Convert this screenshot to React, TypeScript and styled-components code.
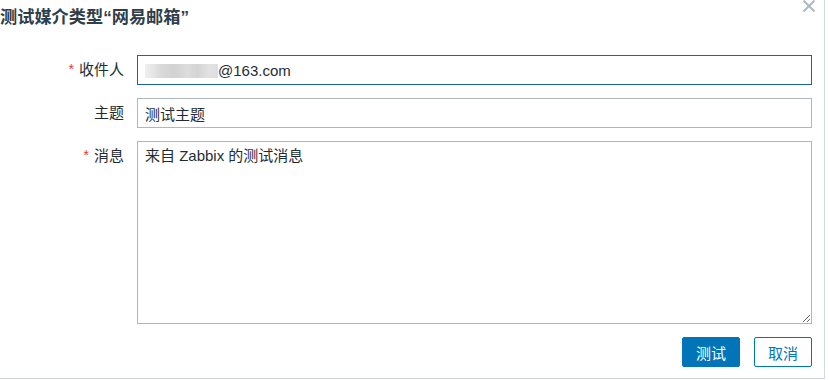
import React from "react";
import styled, { createGlobalStyle } from "styled-components";

const Global = createGlobalStyle`
  html, body { margin: 0; padding: 0; background: #ffffff; }
  body { font-family: "Liberation Sans", "Noto Sans CJK SC", Arial, sans-serif; }
  * { box-sizing: border-box; }
`;

const Dialog = styled.div`
  position: relative;
  width: 825px;
  height: 379px;
  background: #ffffff;
  border-right: 1px solid #d3d9dd;
  border-bottom: 1px solid #cfd4d7;
  padding: 7px 12px 0 0;
  display: flex;
  flex-direction: column;
`;

const Title = styled.h4`
  margin: 0;
  font-size: 17.2px;
  line-height: 20px;
  font-weight: bold;
  color: #2f3e48;
  font-family: "Liberation Sans", "Noto Sans CJK SC", Arial, sans-serif;
`;

const CloseButton = styled.button`
  position: absolute;
  top: 0;
  right: 7px;
  width: 16px;
  height: 14px;
  padding: 0;
  border: 0;
  background: transparent;
  display: flex;
  align-items: flex-start;
  justify-content: center;
  cursor: pointer;
`;

const Form = styled.div`
  margin-top: 28px;
  display: grid;
  grid-template-columns: 124px 1fr;
  column-gap: 13px;
  row-gap: 13px;
`;

const Label = styled.label`
  text-align: right;
  font-size: 15px;
  line-height: 30px;
  color: #1f2c33;
  white-space: nowrap;
`;

const Required = styled.span`
  color: #e33734;
  margin-right: 5px;
  font-size: 14px;
  position: relative;
  top: -1px;
`;

const Field = styled.div<{ $focused?: boolean }>`
  height: 30px;
  border: 1px solid ${(p) => (p.$focused ? "#1e64a0" : "#acb7be")};
  background: #ffffff;
  display: flex;
  align-items: center;
  padding: 0 7px;
  font-size: 15px;
  color: #1f2c33;
`;

const Masked = styled.span`
  display: inline-block;
  width: 73px;
  height: 14px;
  margin-top: 2px;
  background: linear-gradient(
    90deg,
    #efefef 0%,
    #e4e4e4 12%,
    #d9d9d9 22%,
    #d2d2d2 40%,
    #dcdcdc 58%,
    #d4d4d4 72%,
    #e2e2e2 88%,
    #dedede 100%
  );
  filter: blur(0.6px);
`;

const Area = styled.textarea`
  height: 183px;
  border: 1px solid #acb7be;
  padding: 5px 7px;
  font-family: "Liberation Sans", "Noto Sans CJK SC", Arial, sans-serif;
  font-size: 15px;
  line-height: 18px;
  color: #1f2c33;
  resize: both;
  outline: none;
  margin: 0;
  display: block;
  width: 100%;
`;

const Footer = styled.div`
  margin-top: 13px;
  display: flex;
  justify-content: flex-end;
  gap: 14px;
`;

const Button = styled.button<{ $primary?: boolean }>`
  height: 30px;
  min-width: 58px;
  padding: 0 11px;
  border-radius: 2px;
  border: 1px solid #0275b8;
  background: ${(p) => (p.$primary ? "#0275b8" : "#ffffff")};
  color: ${(p) => (p.$primary ? "#ffffff" : "#0275b8")};
  font-family: "Liberation Sans", "Noto Sans CJK SC", Arial, sans-serif;
  font-size: 15px;
  cursor: pointer;
`;

export default function App() {
  return (
    <>
      <Global />
      <Dialog>
        <Title>测试媒介类型“网易邮箱”</Title>
        <CloseButton aria-label="关闭">
          <svg width="14" height="13" viewBox="0 0 14 13">
            <path d="M1.5 0.5 L12.5 11.5 M12.5 0.5 L1.5 11.5" stroke="#acbbc2" strokeWidth="2" fill="none" />
          </svg>
        </CloseButton>
        <Form>
          <Label>
            <Required>*</Required>收件人
          </Label>
          <Field $focused>
            <Masked />
            <span>@163.com</span>
          </Field>
          <Label>主题</Label>
          <Field>测试主题</Field>
          <Label>
            <Required>*</Required>消息
          </Label>
          <Area defaultValue="来自 Zabbix 的测试消息" />
        </Form>
        <Footer>
          <Button $primary>测试</Button>
          <Button>取消</Button>
        </Footer>
      </Dialog>
    </>
  );
}
